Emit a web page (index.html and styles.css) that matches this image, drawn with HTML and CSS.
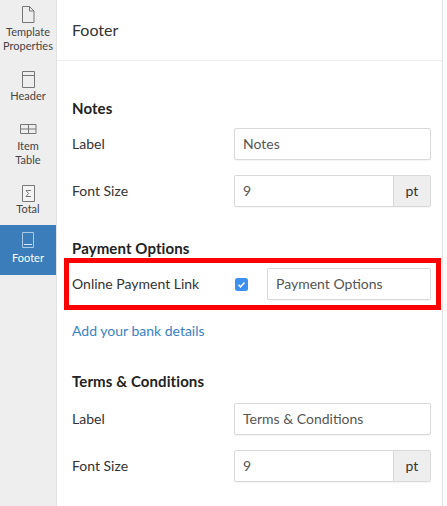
FILE: index.html
```html
<!DOCTYPE html>
<html lang="en">
<head>
<meta charset="utf-8">
<title>Footer</title>
<link rel="stylesheet" href="styles.css">
</head>
<body>
<div class="app">
  <nav class="sidebar">
    <a class="nav-item nav-template">
      <svg class="icon" width="14" height="17" viewBox="0 0 14 17"><path d="M1.500.5h7l4.500 4.500v11.500h-11.500z M8.500.5v4.500h4.500" fill="none" stroke="#777"/></svg>
      <span>Template<br>Properties</span>
    </a>
    <a class="nav-item nav-header">
      <svg class="icon" width="13" height="17" viewBox="0 0 13 17"><path d="M.5.5h12v16h-12z" fill="none" stroke="#777"/><path d="M.5 4.500h12" stroke="#777"/></svg>
      <span>Header</span>
    </a>
    <a class="nav-item nav-table">
      <svg class="icon" width="17" height="10" viewBox="0 0 17 10"><path d="M.5.5h15.500v9h-15.500z M.5 5h15.500 M8.500.5v9" fill="none" stroke="#777"/></svg>
      <span class="two">Item<br>Table</span>
    </a>
    <a class="nav-item nav-total">
      <svg class="icon" width="13" height="17" viewBox="0 0 13 17"><path d="M.5.5h12v16h-12z" fill="#f4f4f4" stroke="#777"/><path d="M9 5.500h-5l2.500 3-2.500 3h5" fill="none" stroke="#777"/></svg>
      <span>Total</span>
    </a>
    <a class="nav-item nav-footer active">
      <svg class="icon" width="12" height="16" viewBox="0 0 12 16"><path d="M.5.5h11v15h-11z" fill="none" stroke="#a9cbe8"/><path d="M2 12.500h8" stroke="#d5e5f3"/></svg>
      <span>Footer</span>
    </a>
  </nav>
  <main class="main">
    <header class="title">Footer</header>
    <section class="section notes">
      <h2>Notes</h2>
      <div class="row"><label>Label</label><div class="field">Notes</div></div>
      <div class="row"><label>Font Size</label><div class="field group"><span class="value">9</span><span class="addon">pt</span></div></div>
    </section>
    <section class="section payment">
      <h2>Payment Options</h2>
      <div class="highlight">
        <label>Online Payment Link</label>
        <span class="check"><svg width="13" height="13" viewBox="0 0 13 13"><rect width="13" height="13" rx="2.500" fill="#3d90ef"/><path d="M3.500 6.800l2 2 4-4.300" fill="none" stroke="#fff" stroke-width="1.500"/></svg></span>
        <div class="field short">Payment Options</div>
      </div>
      <a class="link">Add your bank details</a>
    </section>
    <section class="section terms">
      <h2>Terms &amp; Conditions</h2>
      <div class="row"><label>Label</label><div class="field">Terms &amp; Conditions</div></div>
      <div class="row"><label>Font Size</label><div class="field group"><span class="value">9</span><span class="addon">pt</span></div></div>
    </section>
  </main>
</div>
</body>
</html>
```
FILE: styles.css
```css
* { box-sizing: border-box; }
html, body { margin: 0; height: 100%; overflow: hidden; background: #fff; }
body { width: 447px; font-family: Lato, "Open Sans", sans-serif; font-size: 14px; color: #333; }
.app { display: flex; width: 443px; height: 506px; border-right: 1px solid #e4e4e4; }

.sidebar { width: 57px; flex: none; background: #eee; border-right: 1px solid #e2e2e2; }
.nav-item { display: flex; flex-direction: column; align-items: center; font-size: 11px; line-height: 14px; color: #444; text-align: center; }
.icon { display: block; flex: none; }
.nav-template { padding-top: 6px; height: 61px; }
.nav-template .icon { margin-bottom: 2px; }
.nav-header { padding-top: 10px; height: 55px; }
.nav-header .icon { margin-bottom: 1px; }
.nav-table { padding-top: 8px; height: 63px; }
.nav-table .icon { margin-bottom: 5px; }
.nav-total { padding-top: 6px; height: 46px; }
.nav-total .icon { margin-bottom: 0; }
.nav-footer { padding-top: 7px; height: 50px; }
.nav-footer .icon { margin-bottom: 3px; }
.nav-item.active { background: #3b7dbb; color: #fff; width: 56px; }

.main { flex: 1; min-width: 0; }
.title { height: 61px; padding: 21px 0 0 15px; font-size: 16px; line-height: 18px; border-bottom: 1px solid #eee; color: #333; }
.section { padding: 0 11px 0 15px; }
.section h2 { margin: 0; font-size: 15px; line-height: 18px; font-weight: 700; letter-spacing: .1px; color: #222; }
.notes { padding-top: 38px; }
.payment { padding-top: 32px; }
.terms { padding-top: 32px; }
.row { display: flex; align-items: center; height: 32px; margin-top: 15px; }
.notes h2 + .row { margin-top: 11px; }
.terms h2 + .row { margin-top: 13px; }
.row label { width: 162px; flex: none; line-height: 16px; }
.field { height: 32px; border: 1px solid #d9d9d9; border-radius: 2px; padding: 0 8px; line-height: 30px; color: #555; flex: 1; background: #fff; box-shadow: 0 1px 1px rgba(0,0,0,.04); }
.group { display: flex; padding: 0; }
.value { flex: 1; padding: 0 8px; }
.addon { width: 37px; flex: none; background: #eee; border-left: 1px solid #d9d9d9; text-align: center; color: #333; }
.highlight { display: flex; align-items: center; height: 52px; margin: 1px -10px 0 -8px; padding: 0 5px 0 3px; border: 5px solid #f00; }
.highlight label { width: 163px; flex: none; line-height: 16px; }
.check { display: flex; width: 32px; flex: none; }
.short { flex: none; width: 164px; }
.link { display: block; margin-top: 12px; line-height: 18px; color: #3b82c4; }
```
